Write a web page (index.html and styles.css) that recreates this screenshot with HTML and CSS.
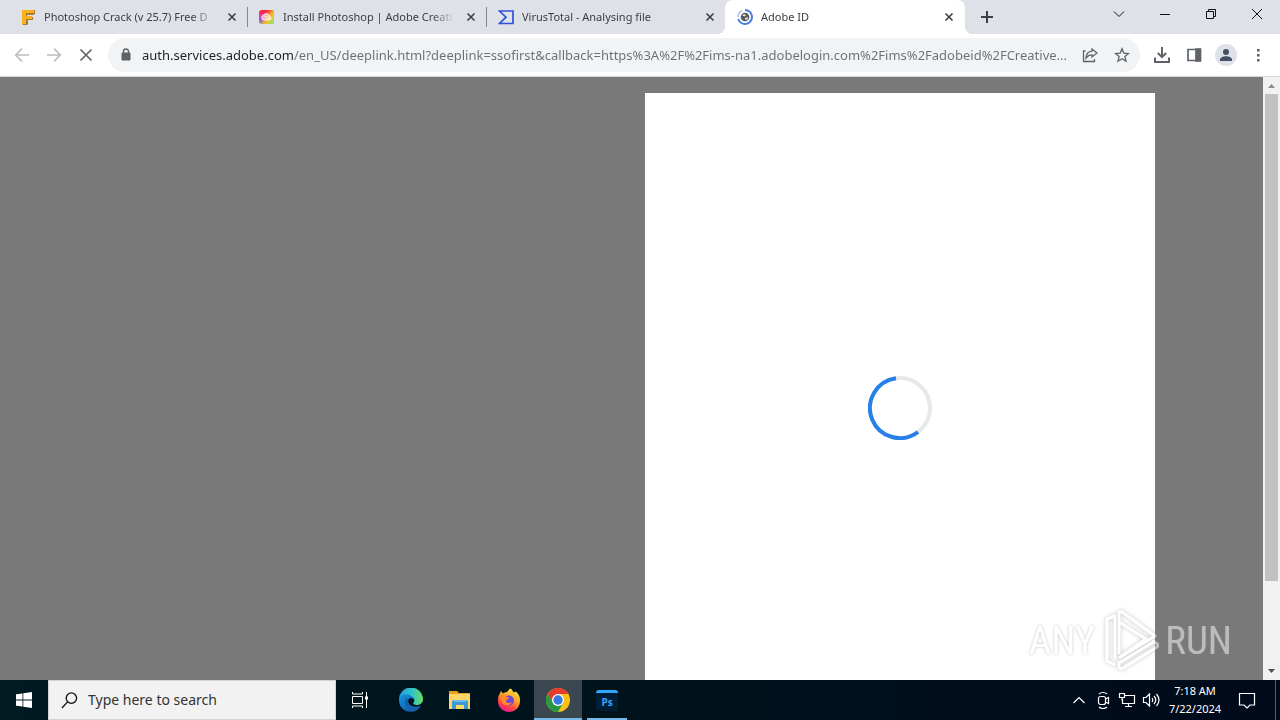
FILE: index.html
```html
<!DOCTYPE html>
<html lang="en">
<head>
<meta charset="utf-8">
<title>Adobe ID</title>
<link rel="stylesheet" href="styles.css">
</head>
<body>
<header class="tabstrip">
  <div class="tab">
    <svg class="favicon" viewBox="0 0 16 16"><path d="M3 1h12v4l-2 1H7v2h6v3H8v4l-1 1H3l-1-2V3z" fill="#a87a2c"/><path d="M2 1h12v3H6v3h6v3H6v5H2z" fill="#fbb11b"/></svg>
    <span class="tab-title">Photoshop Crack (v 25.7) Free D</span>
    <button class="tab-close" aria-label="Close tab"><svg viewBox="0 0 16 16"><path d="M4.500 4.500l7 7M11.500 4.500l-7 7"/></svg></button>
  </div>
  <div class="tab">
    <svg class="favicon" viewBox="0 0 16 16"><defs><linearGradient id="cc" x1="0" y1="0" x2="0" y2="1"><stop offset="0" stop-color="#f5202c"/><stop offset=".4" stop-color="#e8409a"/><stop offset=".7" stop-color="#9a50ff"/><stop offset="1" stop-color="#4a9cff"/></linearGradient><linearGradient id="cc2" x1="0" y1="0" x2="1" y2=".7"><stop offset=".35" stop-color="#ff8000" stop-opacity="0"/><stop offset=".7" stop-color="#ffb820"/><stop offset="1" stop-color="#a0e05b"/></linearGradient></defs><rect y="1" width="15" height="14" rx="3" fill="url(#cc)"/><rect y="1" width="15" height="14" rx="3" fill="url(#cc2)"/><path d="M5 11a2.600 2.600 0 0 1-.5-5 3.800 3.800 0 0 1 6.500 1.500 2 2 0 0 1 0 3.500zM4.500 7c3-.5 4 3 7 2" fill="#fff" fill-opacity=".5" stroke="#fff" stroke-width=".9"/></svg>
    <span class="tab-title">Install Photoshop | Adobe Creati</span>
    <button class="tab-close" aria-label="Close tab"><svg viewBox="0 0 16 16"><path d="M4.500 4.500l7 7M11.500 4.500l-7 7"/></svg></button>
  </div>
  <div class="tab">
    <svg class="favicon" viewBox="0 0 16 16"><path d="M1.500 2H15v12.500H1.500L8 8.200z" fill="none" stroke="#3050e0" stroke-width="1.700"/></svg>
    <span class="tab-title">VirusTotal - Analysing file</span>
    <button class="tab-close" aria-label="Close tab"><svg viewBox="0 0 16 16"><path d="M4.500 4.500l7 7M11.500 4.500l-7 7"/></svg></button>
  </div>
  <div class="tab tab-active">
    <svg class="favicon" viewBox="0 0 16 16"><path d="M8 1a7 7 0 1 1-6.700 9" fill="none" stroke="#4a7ee0" stroke-width="2"/><path d="M1 8a7 7 0 0 1 4-6.300" fill="none" stroke="#a9c3f3" stroke-width="1.500"/><circle cx="8" cy="8" r="4.300" fill="#55585c"/><path d="M5 6.500l2-1.500 2 1-1 1.500zM8 9l3-1-.5 2.500-2 .5z" fill="#e5e3df"/></svg>
    <span class="tab-title">Adobe ID</span>
    <button class="tab-close" aria-label="Close tab"><svg viewBox="0 0 16 16"><path d="M4.500 4.500l7 7M11.500 4.500l-7 7"/></svg></button>
  </div>
  <button class="new-tab" aria-label="New tab"><svg viewBox="0 0 16 16"><path d="M8 2v12M2 8h12"/></svg></button>
  <div class="window-controls">
    <button aria-label="Search tabs"><svg viewBox="0 0 16 16"><path d="M3 5.500l5 5 5-5"/></svg></button>
    <button aria-label="Minimize"><svg viewBox="0 0 16 16"><path d="M3 8.500h10"/></svg></button>
    <button aria-label="Restore"><svg viewBox="0 0 16 16"><path d="M3.500 5.500h7v7h-7zM5.500 5V3.500h7v7H11"/></svg></button>
    <button aria-label="Close"><svg viewBox="0 0 16 16"><path d="M3 3l10 10M13 3L3 13"/></svg></button>
  </div>
</header>

<nav class="toolbar">
  <button class="tool tool-off" aria-label="Back"><svg viewBox="0 0 16 16"><path d="M15 8H2M8 1.500L1.700 8 8 14.500"/></svg></button>
  <button class="tool tool-off" aria-label="Forward"><svg viewBox="0 0 16 16"><path d="M1 8h13M8 1.500L14.300 8 8 14.500"/></svg></button>
  <button class="tool" aria-label="Stop"><svg viewBox="0 0 16 16"><path d="M2.500 2.500l11 11M13.500 2.500l-11 11"/></svg></button>
  <div class="omnibox">
    <svg class="lock" viewBox="0 0 16 16"><path d="M4 6h8v7H4z" fill="#5f6368" stroke="#5f6368" stroke-linejoin="round"/><path d="M5.500 6V4.500a2.500 2.500 0 0 1 5 0V6" fill="none" stroke="#5f6368" stroke-width="1.500"/></svg>
    <input class="url" type="text" aria-label="Address" value="auth.services.adobe.com/en_US/deeplink.html?deeplink=ssofirst&amp;callback=https%3A%2F%2Fims-na1.adobelogin.com%2Fims%2Fadobeid%2FCreative...">
    <button class="tool" aria-label="Share"><svg viewBox="0 0 16 16" class="thin"><path d="M3.500 4H1.500v10.500h11V12M10 2l5 4-5 4V7.800C7 7.800 5.500 9 4 11c.3-4 2.500-6.500 6-6.800z"/></svg></button>
    <button class="tool" aria-label="Bookmark"><svg viewBox="0 0 16 16" class="thin"><path d="M8 1.800l1.800 4.300 4.700.4-3.600 3.100 1.100 4.600L8 11.700l-4 2.500 1.100-4.600L1.500 6.500l4.700-.4z"/></svg></button>
  </div>
  <div class="tools">
    <button class="tool" aria-label="Downloads"><svg viewBox="0 0 16 16"><path d="M8 0v10M3.800 6L8 10.200 12.200 6M1 10.500V15h14v-4.500" stroke-width="2"/></svg></button>
    <button class="tool" aria-label="Side panel"><svg viewBox="0 0 16 16"><path d="M2 2.500h12v11H2z"/><path d="M10 2h4.500v12H10z" fill="#5f6368"/></svg></button>
    <button class="tool" aria-label="Profile"><svg class="avatar" viewBox="0 0 22 22"><circle cx="11" cy="11" r="11" fill="#dee1ea"/><circle cx="11" cy="8" r="3" fill="#474f63"/><path d="M5 17v-1.500c0-2 3-3.300 6-3.300s6 1.300 6 3.300V17z" fill="#474f63"/></svg></button>
    <button class="tool" aria-label="Menu"><svg viewBox="0 0 16 16"><path d="M7 2h2.600v2.600H7zM7 7h2.600v2.600H7zM7 12h2.600v2.600H7z" fill="#5f6368" stroke="none"/></svg></button>
  </div>
</nav>

<main class="page">
  <div class="viewport">
    <section class="card" aria-label="Loading">
      <svg class="spinner" viewBox="0 0 64 64"><circle cx="32" cy="32" r="30" fill="none" stroke="#e6e8ea" stroke-width="4"/><path d="M28 2.300A30 30 0 1 0 50 56" fill="none" stroke="#2680e8" stroke-width="4"/></svg>
    </section>
  </div>
  <div class="scrollbar">
    <svg viewBox="0 0 17 17"><path d="M5 11l3.500-4 3.500 4z" fill="#8b8b8b"/></svg>
    <div class="thumb"></div>
    <svg viewBox="0 0 17 17"><path d="M5 6l3.500 4L12 6z" fill="#505050"/></svg>
  </div>
  <div class="watermark">
    <span>ANY</span>
    <svg viewBox="0 0 58 62"><path d="M14 11V6L6 9v42l8 4M14 10v38M18 44V3q0-2 3-1l33 24-36 22M18 12l27 17-27 19M18 52v5q0 3 4 1l34-21q2-2-1-4l-4-2M18 53l36-22" fill="none" stroke="#fff" stroke-width="3" stroke-linejoin="round"/></svg>
    <span>RUN</span>
  </div>
</main>

<footer class="taskbar">
  <button class="task" aria-label="Start"><svg viewBox="0 0 16 16" class="i16"><path d="M0 2.300l6.500-.9v6.100H0zM7.300 1.300L16 0v7.500H7.300zM0 8.400h6.500v6.200L0 13.700zM7.300 8.400H16V16l-8.700-1.300z" fill="#fff"/></svg></button>
  <label class="search">
    <svg viewBox="0 0 18 18"><circle cx="11" cy="6.500" r="5.500"/><path d="M7 10.500L1 17"/></svg>
    <input type="text" placeholder="Type here to search" aria-label="Type here to search">
  </label>
  <button class="task task-view" aria-label="Task view"><svg viewBox="0 0 18 18" class="i18"><path d="M1.500 5.500h10v7h-10zM1.500 1v2h10V1M1.500 17v-2h10v2M15.500 1v16" fill="none" stroke="#fff"/><path d="M14 5.500h3v3h-3z" fill="#fff"/></svg></button>
  <button class="task" aria-label="Edge"><svg viewBox="0 0 24 24"><defs><linearGradient id="e1" x1="0" x2="1"><stop stop-color="#2498dc"/><stop offset=".55" stop-color="#2fc4c9"/><stop offset="1" stop-color="#6bdc59"/></linearGradient><linearGradient id="e2" x1="0" x2="1" y1="0" y2="1"><stop stop-color="#1793df"/><stop offset="1" stop-color="#0c4fa0"/></linearGradient></defs><path d="M0 12A12 12 0 0 1 24 11c0 4-3 6-6.500 6-3 0-4-1.500-2.700-3 1.700-2.500-.4-5.800-4.600-5.800C5 8.200 1 10.500 0 12z" fill="url(#e1)"/><path d="M0 12c0-3 3-5.500 7-5.500 4.500 0 8 2.500 7.600 5.500-.9-2.400-4-2.700-5.100-.5C7.500 16 13 20.500 21.500 18 16 27.500 0 25 0 12z" fill="url(#e2)"/><path d="M7.500 9.500C4 13 6 22 14 23.500c3-.4 6-2.500 7.500-5C14 21 8 17 9 12z" fill="#1460ac"/></svg></button>
  <button class="task" aria-label="File Explorer"><svg viewBox="0 0 24 24"><path d="M1 3h8l2 2h11v5H1z" fill="#e8a11e"/><path d="M1 6h21v15H1z" fill="#ffd768"/><path d="M4 21v-8l2-1h12l2 1v8h-4v-4H8v4z" fill="#3c9bd6"/><path d="M6 12h12v2H6z" fill="#67bdec"/></svg></button>
  <button class="task" aria-label="Firefox"><svg viewBox="0 0 24 24"><defs><linearGradient id="f1" x1=".8" y1="0" x2=".3" y2="1"><stop stop-color="#fff04a"/><stop offset=".45" stop-color="#ff9b22"/><stop offset=".75" stop-color="#ff414c"/><stop offset="1" stop-color="#e31587"/></linearGradient></defs><path d="M2 7l2-4 2 2.500C7 4.500 9 4 10 4l3-3.500c2 0 2.500 3 4 4l2-1c3 3 4.500 6 4 10C22 28 1 27 1 13c0-3 0-4 1-6z" fill="url(#f1)"/><circle cx="12" cy="12.500" r="5" fill="#7048d8"/><path d="M4 9c3-2 5 0 8 .5 0 2-3 2-3 4 1 2 5 2 6 0-1 5-9 5-10.500 0z" fill="#ff8b24"/><path d="M11 6c4 0 8 3 7 8 3-5 0-9-4-10z" fill="#ffbd2c"/></svg></button>
  <button class="task task-current" aria-label="Chrome"><svg viewBox="0 0 24 24"><circle cx="12" cy="12" r="12" fill="#fbc116"/><path d="M1.600 6A12 12 0 0 1 22.400 6H12L7 15z" fill="#e33b2e"/><path d="M1.600 6A12 12 0 0 0 12 24l5.200-9L12 17.500 7 15z" fill="#279847"/><circle cx="12" cy="12" r="6" fill="#fff"/><circle cx="12" cy="12" r="4.700" fill="#3778e4"/></svg></button>
  <button class="task task-open" aria-label="Photoshop"><span class="ps">Ps</span></button>
  <div class="tray">
    <button aria-label="Hidden icons"><svg viewBox="0 0 18 18"><path d="M3.500 12L9 6.500l5.500 5.500"/></svg></button>
    <button aria-label="Camera"><svg viewBox="0 0 18 18"><rect x="4.500" y="5.500" width="7" height="8" rx="2"/><path d="M11.500 8l3-1.500v6l-3-1.500M5 3c2-2 6-2 8 0M5 16c2 2 6 2 8 0"/></svg></button>
    <button aria-label="Network"><svg viewBox="0 0 18 18"><path d="M6 4.500h10.500v8H4.500V8M10.500 12.500v3M7 15.500h7M1.500 2.500h5v4h-5zM4 6.500v3"/></svg></button>
    <button aria-label="Volume"><svg viewBox="0 0 18 18"><path d="M1.500 6.500h2.500l3.500-3.500v12L4 11.500H1.500zM10 7q1.500 2 0 4M12 5q3.500 4 0 8M14.500 3q5 6 0 12"/></svg></button>
    <time class="clock"><span>7:18 AM</span><span>7/22/2024</span></time>
    <button class="notify" aria-label="Notifications"><svg viewBox="0 0 18 18"><path d="M1.500 2.500h15v11.500H12l-3 3-3-3H1.500z"/></svg></button>
    <span class="show-desktop"></span>
  </div>
</footer>
</body>
</html>
```
FILE: styles.css
```css
* { box-sizing: border-box; }

body {
  margin: 0;
  height: 100vh;
  display: flex;
  flex-direction: column;
  overflow: hidden;
  font-family: "Noto Sans", "Open Sans", sans-serif;
  color: #3c4043;
}

button {
  display: flex;
  align-items: center;
  justify-content: center;
  padding: 0;
  border: 0;
  background: none;
}

svg { flex: none; }

/* Tabs */
.tabstrip {
  display: flex;
  flex: none;
  height: 34px;
  padding-left: 8px;
  background: #dee1e8;
}
.tab {
  display: flex;
  align-items: center;
  flex: 0 1 239px;
  min-width: 0;
  gap: 8px;
  padding: 0 7px 0 12px;
  position: relative;
}
.tab:has(+ .tab:not(.tab-active))::after {
  content: "";
  position: absolute;
  right: -1px;
  top: 7px;
  width: 1px;
  height: 20px;
  background: #85888e;
}
.tab-active {
  flex-basis: 240px;
  padding-right: 8px;
  background: #fff;
  border-radius: 8px 8px 0 0;
}
.tab-active::before,
.tab-active::after {
  content: "";
  position: absolute;
  bottom: 0;
  width: 8px;
  height: 8px;
}
.tab-active::before {
  left: -8px;
  background: radial-gradient(circle at 0 0, transparent 8px, #fff 8px);
}
.tab-active::after {
  right: -8px;
  background: radial-gradient(circle at 100% 0, transparent 8px, #fff 8px);
}
.favicon { width: 16px; height: 16px; }
.tab-title {
  flex: 1;
  overflow: hidden;
  white-space: nowrap;
  font-size: 11px;
  line-height: 16px;
  mask-image: linear-gradient(90deg, #000 calc(100% - 24px), transparent);
}
.tab-close svg,
.new-tab svg,
.window-controls svg {
  width: 16px;
  height: 16px;
  fill: none;
  stroke: #3c4043;
  stroke-width: 2;
}
.tab-close svg { stroke-width: 1.6; }
.new-tab { width: 28px; margin-left: 8px; }
.window-controls { display: flex; margin-left: auto; padding-bottom: 6px; }
.window-controls button { width: 46px; }
.window-controls svg { stroke: #111; stroke-width: 1; }

/* Toolbar */
.toolbar {
  display: flex;
  flex: none;
  align-items: center;
  height: 43px;
  padding: 0 6px;
  background: #fff;
  border-bottom: 1px solid #d5d7da;
}
.tool { flex: none; width: 32px; height: 32px; }
.tool svg {
  width: 16px;
  height: 16px;
  fill: none;
  stroke: #5f6368;
  stroke-width: 1.7;
}
.tool-off svg { stroke: #babcbe; }
.tool .thin { stroke-width: 1.3; }
.tool .avatar { width: 22px; height: 22px; stroke: none; }
.omnibox {
  display: flex;
  align-items: center;
  flex: 1;
  min-width: 0;
  height: 34px;
  margin: 0 6px;
  padding: 0 2px 0 10px;
  border-radius: 17px;
  background: #f1f3f4;
}
.lock { width: 16px; height: 16px; margin-right: 8px; }
.url {
  flex: 1;
  min-width: 0;
  padding: 0;
  border: 0;
  outline: 0;
  font: 13px/20px "Noto Sans", "Open Sans", sans-serif;
  color: #5f6368;
  -webkit-text-fill-color: transparent;
  background: linear-gradient(90deg, #202124 152px, #6b6f74 152px);
  background-clip: text;
  -webkit-background-clip: text;
}
.tools { display: flex; }

/* Page */
.page {
  position: relative;
  display: flex;
  flex: 1;
  min-height: 0;
  background: #797979;
}
.viewport {
  display: flex;
  flex: 1;
  justify-content: flex-end;
  align-items: flex-start;
  padding: 16px 108px 0 16px;
  overflow: hidden;
}
.card {
  display: flex;
  align-items: center;
  justify-content: center;
  width: 100%;
  max-width: 510px;
  min-height: 630px;
  background: #fff;
}
.spinner { width: 64px; height: 64px; }
.scrollbar {
  display: flex;
  flex-direction: column;
  align-items: center;
  width: 17px;
  background: #f1f1f1;
}
.scrollbar svg { width: 17px; height: 17px; }
.thumb { width: 13px; height: 487px; margin-bottom: auto; background: #c1c1c1; }
.watermark {
  position: absolute;
  right: 48px;
  bottom: 8px;
  display: flex;
  align-items: center;
  gap: 6px;
  opacity: .5;
  font: 39px/62px "Roboto Condensed", "Open Sans Condensed", "Liberation Sans Narrow", "DejaVu Sans Condensed", sans-serif;
  color: #fff;
  text-shadow: 0 0 3px #888;
}
.watermark svg { width: 58px; height: 62px; filter: drop-shadow(0 0 2px #888); }

/* Taskbar */
.taskbar {
  display: flex;
  flex: none;
  height: 40px;
  background: linear-gradient(90deg, #001a22, #00121c 50%, #000a1b);
}
.task { width: 48px; margin-right: 1px; }
.task:first-child { margin-right: 0; }
.task svg { width: 24px; height: 24px; }
.task .i16 { width: 16px; height: 16px; }
.task .i18 { width: 18px; height: 18px; }
.task-view { margin-right: 3px; }
.task-current {
  background: #3a474e;
  border-bottom: 2px solid #76b9ed;
  padding-top: 2px;
}
.task-open {
  background: linear-gradient(#76b9ed, #76b9ed) center bottom / 40px 2px no-repeat;
}
.ps {
  width: 22px;
  height: 21px;
  border-top: 3px solid #31a8ff;
  border-radius: 3px;
  background: #001e36;
  color: #31a8ff;
  font: bold 10px/18px "Open Sans", sans-serif;
}
.search {
  display: flex;
  align-items: center;
  gap: 10px;
  flex: 0 1 288px;
  padding: 0 12px;
  border: 1px solid #d4d4d4;
  background: #f2f2f2;
}
.search svg { width: 17px; height: 17px; fill: none; stroke: #111; stroke-width: 1.4; }
.search input {
  flex: 1;
  min-width: 0;
  padding: 0;
  border: 0;
  outline: 0;
  background: none;
  font: 14px/20px "Noto Sans", "Open Sans", sans-serif;
}
.search input::placeholder { color: #333; opacity: 1; }
.tray { display: flex; margin-left: auto; }
.tray button { width: 24px; }
.tray svg { width: 18px; height: 18px; fill: none; stroke: #fff; stroke-width: 1.2; }
.clock {
  display: flex;
  flex-direction: column;
  justify-content: center;
  align-items: center;
  width: 64px;
  color: #fff;
  font-size: 11px;
  line-height: 18px;
}
.tray .notify { width: 40px; margin-right: 8px; }
.show-desktop { width: 5px; border-left: 1px solid #59606b; }
```
